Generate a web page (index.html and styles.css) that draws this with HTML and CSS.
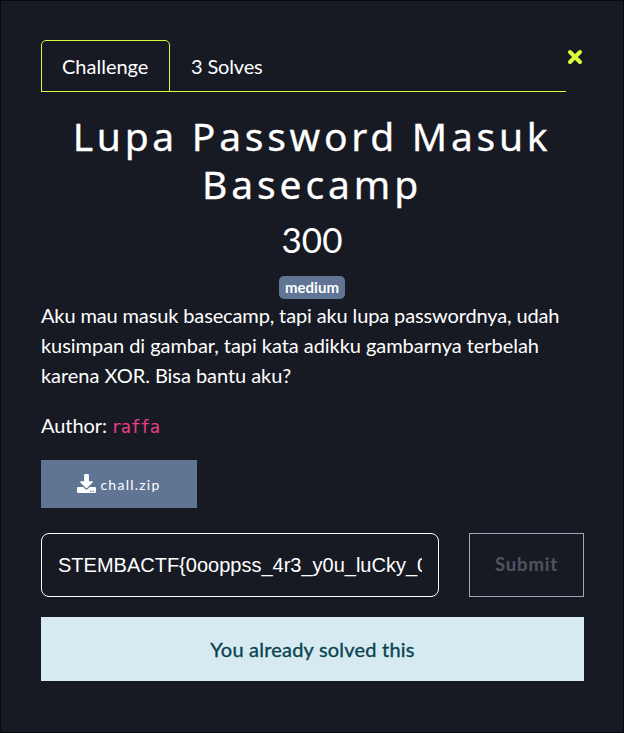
FILE: index.html
```html
<!DOCTYPE html>
<html lang="id">
<head>
<meta charset="utf-8">
<title>Challenge</title>
<link rel="stylesheet" href="styles.css">
</head>
<body>
<main class="modal">
  <header class="top">
    <nav class="tabs"><a class="tab active">Challenge</a><a class="tab solves">3 Solves</a></nav>
    <button class="close" aria-label="Close"><svg width="16" height="16" viewBox="0 0 16 16"><path d="M3 3 13 13M13 3 3 13"/></svg></button>
  </header>
  <h2 class="name"><span>Lupa Password Masuk</span><br><span class="second">Basecamp</span></h2>
  <h3 class="value">300</h3>
  <div class="tags"><span class="badge">medium</span></div>
  <p class="desc"><span class="first">Aku mau masuk basecamp, tapi aku lupa passwordnya, udah</span><br><span>kusimpan di gambar, tapi kata adikku gambarnya terbelah</span><br><span>karena XOR. Bisa bantu aku?</span></p>
  <p class="desc author">Author: <code>raffa</code></p>
  <a class="file"><svg width="19" height="19" viewBox="0 0 512 512"><path fill="#fff" d="M216 0h80c13.300 0 24 10.700 24 24v168h87.700c17.800 0 26.700 21.500 14.100 34.100L269.700 378.300c-7.500 7.500-19.800 7.500-27.300 0L90.100 226.100c-12.600-12.600-3.700-34.100 14.100-34.100H192V24c0-13.300 10.700-24 24-24zm296 376v112c0 13.300-10.700 24-24 24H24c-13.300 0-24-10.700-24-24V376c0-13.300 10.700-24 24-24h146.700l49 49c20.100 20.100 52.500 20.100 72.600 0l49-49H488c13.300 0 24 10.700 24 24zm-124 88c0-11-9-20-20-20s-20 9-20 20 9 20 20 20 20-9 20-20zm64 0c0-11-9-20-20-20s-20 9-20 20 9 20 20 20 20-9 20-20z"/></svg><span>chall.zip</span></a>
  <form class="answer">
    <div class="field"><span class="flag">STEMBACTF{0ooppss_4r3_y0u_luCky_0r</span></div>
    <button class="submit" type="button" disabled>Submit</button>
  </form>
  <div class="alert">You already solved this</div>
</main>
</body>
</html>
```

FILE: styles.css
```css
* { box-sizing: border-box; }
body { margin: 0; background: #181a23; color: #fff; font-family: Lato, sans-serif; }
.modal { width: 624px; height: 733px; padding: 39px 40px 0 40px; border: 1px solid #07080c; border-left-color: #0b0c08; overflow: hidden; }
.top { display: flex; height: 52px; }
.tabs { display: flex; width: 525px; height: 52px; border-bottom: 1px solid #d9fb3f; font-size: 20px; }
.tab { padding: 0 21px; line-height: 52px; height: 52px; white-space: nowrap; }
.solves { letter-spacing: -0.150px; }
.active { width: 129px; padding: 0 20px; line-height: 50px; border: 1px solid #d9fb3f; border-radius: 5px 5px 0 0; }
.close { border: 0; background: none; padding: 0; width: 16px; height: 16px; margin: 9px 0 0 1px; }
.close svg { display: block; }
.close path { stroke: #dcfb3c; stroke-width: 4; stroke-linecap: round; }
.name { margin: 20px 0 0; font: 400 39px/48px "Noto Sans", sans-serif; letter-spacing: 3.720px; text-align: center; white-space: nowrap; -webkit-text-stroke: 0.300px; }
.name .second { letter-spacing: 3.900px; }
.value { margin: 10px 0 0; font-weight: 400; font-size: 35px; line-height: 42px; text-align: center; }
.tags { display: flex; justify-content: center; margin-top: 16px; }
.badge { width: 66px; height: 23px; border-radius: 5px; background: #607594; font-size: 15px; line-height: 23px; font-weight: 700; text-align: center; }
.desc { margin: 1px 0 0; font-size: 20px; line-height: 30px; letter-spacing: -0.050px; white-space: nowrap; }
.desc .first { letter-spacing: -0.130px; }
.author { margin-top: 20px; }
code { font: 17px "DejaVu Sans Mono", monospace; letter-spacing: -0.600px; color: #e83e8c; margin-left: -1px; }
.file { display: flex; align-items: center; justify-content: center; gap: 4px; width: 156px; height: 48px; margin-top: 20px; background: #607594; font-size: 14px; letter-spacing: 1.250px; }
.file svg { margin-top: -2px; }
.answer { display: flex; justify-content: space-between; margin: 25px 0 0; width: 543px; }
.field { width: 398px; height: 64px; border: 1px solid #fff; border-radius: 8px; padding: 0 16px; font: 20px/62px "Liberation Sans", sans-serif; }
.flag { display: block; overflow: hidden; white-space: nowrap; }
.submit { width: 115px; height: 64px; padding: 0 0 2px; border: 1px solid #a4a5b9; background: none; color: #50535f; font: 700 18.500px Lato, sans-serif; letter-spacing: 0.800px; }
.alert { width: 543px; height: 64px; margin-top: 20px; background: #d5ebf1; color: #0c4351; font-size: 20px; line-height: 64px; letter-spacing: 0.210px; text-align: center; -webkit-text-stroke: 0.350px; }
```
